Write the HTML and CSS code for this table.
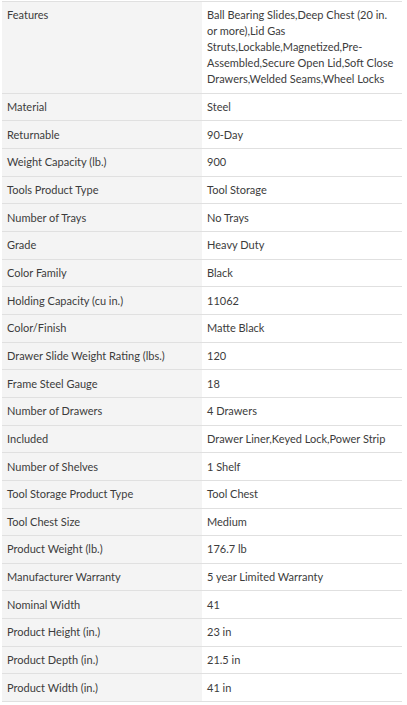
FILE: index.html
```html
<!DOCTYPE html>
<html lang="en">
<head>
<meta charset="utf-8">
<title>Specifications</title>
<link rel="stylesheet" href="styles.css">
</head>
<body>
<div class="wrap">
<table class="specs">
<colgroup><col class="col-name"><col class="col-value"></colgroup>
<tbody>
<tr><th>Features</th><td>Ball Bearing Slides,Deep Chest (20 in. or more),Lid Gas Struts,Lockable,Magnetized,Pre-Assembled,Secure Open Lid,Soft Close Drawers,Welded Seams,Wheel Locks</td></tr>
<tr><th>Material</th><td>Steel</td></tr>
<tr><th>Returnable</th><td>90-Day</td></tr>
<tr><th>Weight Capacity (lb.)</th><td>900</td></tr>
<tr><th>Tools Product Type</th><td>Tool Storage</td></tr>
<tr><th>Number of Trays</th><td>No Trays</td></tr>
<tr><th>Grade</th><td>Heavy Duty</td></tr>
<tr><th>Color Family</th><td>Black</td></tr>
<tr><th>Holding Capacity (cu in.)</th><td>11062</td></tr>
<tr><th>Color/Finish</th><td>Matte Black</td></tr>
<tr><th>Drawer Slide Weight Rating (lbs.)</th><td>120</td></tr>
<tr><th>Frame Steel Gauge</th><td>18</td></tr>
<tr><th>Number of Drawers</th><td>4 Drawers</td></tr>
<tr><th>Included</th><td>Drawer Liner,Keyed Lock,Power Strip</td></tr>
<tr><th>Number of Shelves</th><td>1 Shelf</td></tr>
<tr><th>Tool Storage Product Type</th><td>Tool Chest</td></tr>
<tr><th>Tool Chest Size</th><td>Medium</td></tr>
<tr><th>Product Weight (lb.)</th><td>176.7 lb</td></tr>
<tr><th>Manufacturer Warranty</th><td>5 year Limited Warranty</td></tr>
<tr><th>Nominal Width</th><td>41</td></tr>
<tr><th>Product Height (in.)</th><td>23 in</td></tr>
<tr><th>Product Depth (in.)</th><td>21.5 in</td></tr>
<tr><th>Product Width (in.)</th><td>41 in</td></tr>
</tbody>
</table>
</div>
</body>
</html>
```

FILE: styles.css
```css
html, body {
  margin: 0;
  padding: 0;
  background: #ffffff;
}

.wrap {
  padding: 1px 5px 0 2px;
}

.specs {
  width: 400px;
  border-collapse: collapse;
  table-layout: fixed;
  font-family: Lato, "Liberation Sans", sans-serif;
  font-size: 11px;
  line-height: 16px;
  color: #3c3c3c;
}

.col-name,
.col-value {
  width: 200px;
}

.specs th,
.specs td {
  box-sizing: border-box;
  padding: 5.34px 7px 5.34px 5px;
  border-top: 1px solid #e0e0e0;
  border-bottom: 1px solid #e0e0e0;
  text-align: left;
  vertical-align: top;
  font-weight: normal;
}

.specs th {
  background: #f4f4f4;
}

.specs td {
  background: #ffffff;
}
```
